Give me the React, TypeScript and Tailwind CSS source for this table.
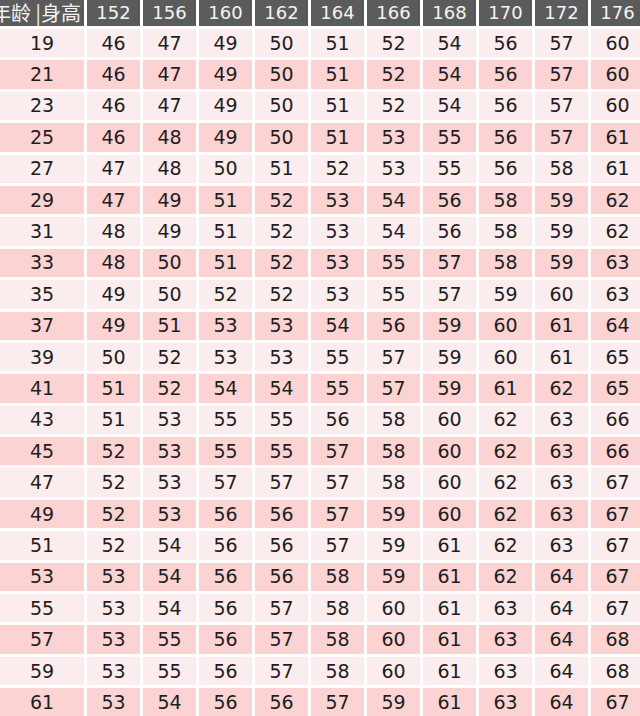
import React from "react";

const heights = [152, 156, 160, 162, 164, 166, 168, 170, 172, 176];

const rows: [number, number[]][] = [
  [19, [46, 47, 49, 50, 51, 52, 54, 56, 57, 60]],
  [21, [46, 47, 49, 50, 51, 52, 54, 56, 57, 60]],
  [23, [46, 47, 49, 50, 51, 52, 54, 56, 57, 60]],
  [25, [46, 48, 49, 50, 51, 53, 55, 56, 57, 61]],
  [27, [47, 48, 50, 51, 52, 53, 55, 56, 58, 61]],
  [29, [47, 49, 51, 52, 53, 54, 56, 58, 59, 62]],
  [31, [48, 49, 51, 52, 53, 54, 56, 58, 59, 62]],
  [33, [48, 50, 51, 52, 53, 55, 57, 58, 59, 63]],
  [35, [49, 50, 52, 52, 53, 55, 57, 59, 60, 63]],
  [37, [49, 51, 53, 53, 54, 56, 59, 60, 61, 64]],
  [39, [50, 52, 53, 53, 55, 57, 59, 60, 61, 65]],
  [41, [51, 52, 54, 54, 55, 57, 59, 61, 62, 65]],
  [43, [51, 53, 55, 55, 56, 58, 60, 62, 63, 66]],
  [45, [52, 53, 55, 55, 57, 58, 60, 62, 63, 66]],
  [47, [52, 53, 57, 57, 57, 58, 60, 62, 63, 67]],
  [49, [52, 53, 56, 56, 57, 59, 60, 62, 63, 67]],
  [51, [52, 54, 56, 56, 57, 59, 61, 62, 63, 67]],
  [53, [53, 54, 56, 56, 58, 59, 61, 62, 64, 67]],
  [55, [53, 54, 56, 57, 58, 60, 61, 63, 64, 67]],
  [57, [53, 55, 56, 57, 58, 60, 61, 63, 64, 68]],
  [59, [53, 55, 56, 57, 58, 60, 61, 63, 64, 68]],
  [61, [53, 54, 56, 56, 57, 59, 61, 63, 64, 67]],
];

export default function App() {
  return (
    <div className="w-[640px] h-[716px] overflow-hidden bg-white">
      <div
        className="grid w-[644px] grid-cols-[84px_repeat(10,53px)] grid-rows-[26px_repeat(22,28.4px)] gap-[3px] leading-none"
        style={{ fontFamily: '"DejaVu Sans", Verdana, sans-serif' }}
      >
        <div
          className="flex items-center justify-end overflow-hidden whitespace-nowrap bg-[#5a5b5a] pr-[3px] text-[20px] text-[#f2f2f2]"
          style={{ fontFamily: '"Noto Sans CJK SC", sans-serif' }}
        >
          年龄 |身高
        </div>
        {heights.map((h) => (
          <div
            key={h}
            className="flex items-center justify-center bg-[#5a5b5a] text-[18px] text-[#f4f4f4]"
          >
            {h}
          </div>
        ))}
        {rows.map(([age, vals], i) => {
          const bg = i % 2 === 0 ? "bg-[#fbeced]" : "bg-[#fcd3d3]";
          return (
            <React.Fragment key={age}>
              <div className={`flex items-center justify-center text-[19px] text-[#1e1e1e] ${bg}`}>
                {age}
              </div>
              {vals.map((v, j) => (
                <div
                  key={j}
                  className={`flex items-center justify-center text-[19px] text-[#1e1e1e] ${bg}`}
                >
                  {v}
                </div>
              ))}
            </React.Fragment>
          );
        })}
      </div>
    </div>
  );
}
